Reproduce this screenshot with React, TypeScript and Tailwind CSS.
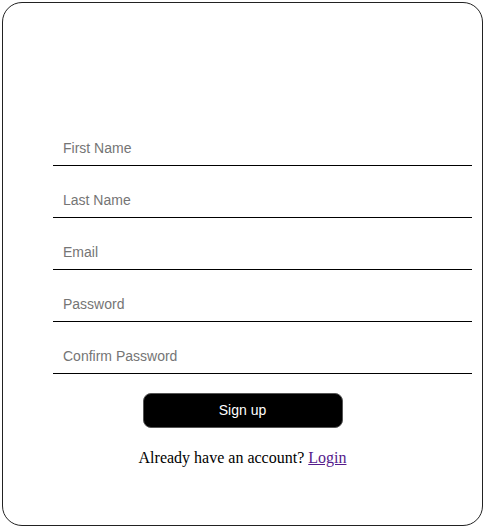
export default function App() {
  const fields = ["First Name", "Last Name", "Email", "Password", "Confirm Password"];

  return (
    <div className="h-[528px] w-[485px] bg-white p-[2px]">
      <div className="flex h-[524px] w-[481px] flex-col rounded-[20px] border border-[#222] pt-[129px]">
        <form className="flex flex-col items-center" onSubmit={(e) => e.preventDefault()}>
          <div className="flex w-full flex-col gap-[18px] pl-[50px] pr-[10px]">
            {fields.map((f) => (
              <input
                key={f}
                type={f.includes("Password") ? "password" : "text"}
                placeholder={f}
                className="h-[34px] w-full border-b border-black bg-transparent px-[10px] pb-[1px] font-['Liberation_Sans',Arial,sans-serif] text-[14px] text-black outline-none placeholder:text-[#757575]"
              />
            ))}
          </div>

          <button
            type="submit"
            className="mt-[19px] h-[35px] w-[200px] rounded-[8px] border border-[#555] bg-black font-['Liberation_Sans',Arial,sans-serif] text-[14px] font-medium text-white"
          >
            Sign up
          </button>

          <p className="mt-[18px] font-['Liberation_Serif','Times_New_Roman',serif] text-[16px] text-black">
            Already have an account?{" "}
            <a href="#" className="text-[#551a8b] underline">
              Login
            </a>
          </p>
        </form>
      </div>
    </div>
  );
}
